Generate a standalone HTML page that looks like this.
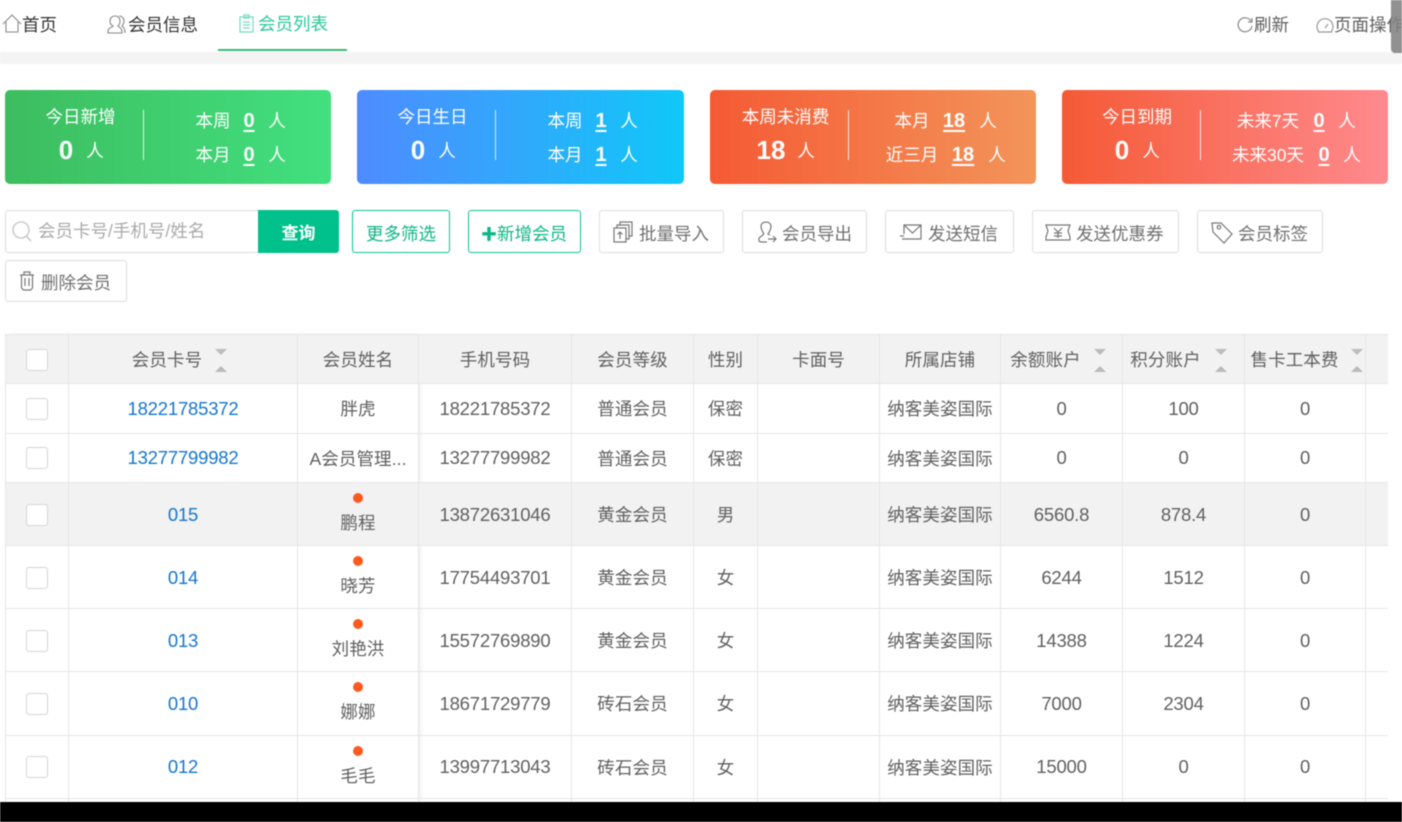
<!DOCTYPE html>
<html lang="zh-CN"><head><meta charset="utf-8"><title>会员列表</title>
<style>
html,body{margin:0;padding:0;background:#fff;width:1402px;height:822px;overflow:hidden}
body{font-family:"Liberation Sans","Noto Sans CJK SC",sans-serif;font-size:17.5px;color:#606060;position:relative}
#w{position:absolute;left:0;top:0;width:1402px;height:822px;filter:blur(.4px);overflow:hidden}
.a{position:absolute;white-space:nowrap;line-height:24px}
.card{position:absolute;top:90px;height:94px;width:326px;border-radius:5px;color:#fff}
.card .a{transform:translateX(-50%);margin-top:1px}
.card u{font-weight:bold;font-size:20px;text-underline-offset:3px;text-decoration-thickness:1.5px}
.dv{position:absolute;top:20px;left:138px;width:1px;height:50px;background:rgba(255,255,255,.8)}
.big{font-size:26px;font-weight:bold;margin-top:0!important}
.btn{position:absolute;box-sizing:border-box;height:43px;top:210px;border:1px solid #ddd;border-radius:3px;background:#fff;color:#707070;line-height:46px;white-space:nowrap}
.btn svg{position:absolute;fill:none;stroke:#777;stroke-width:1.2}
.btn span{position:absolute;top:0}
.gb{border-color:#0cc290;color:#0fb687;text-align:center}
.r{position:absolute;left:5px;display:flex;width:1383px;box-sizing:border-box;border-bottom:1px solid #e6e6e6}
.c{box-sizing:border-box;border-left:1px solid #e6e6e6;display:flex;flex-direction:column;align-items:center;justify-content:center;position:relative;white-space:nowrap;letter-spacing:.1px;padding-top:1px}
.c:nth-child(1){width:63px}.c:nth-child(2){width:229px}.c:nth-child(3){width:121px}.c:nth-child(4){width:153px}.c:nth-child(5){width:122px}.c:nth-child(6){width:64px}.c:nth-child(7){width:122px}.c:nth-child(8){width:121px}.c:nth-child(9){width:122px}.c:nth-child(10){width:122px}.c:nth-child(11){width:121px}.c:nth-child(12){width:23px}
.h{background:#f2f2f2;border-top:1px solid #e6e6e6}
.g{background:#f2f2f2}
.cb{width:22px;height:22px;box-sizing:border-box;border:1px solid #d4d4d4;border-radius:3px;background:#fff}
.l{color:#1676cf;font-size:18.5px;letter-spacing:-.2px}
.n{font-size:18.5px;letter-spacing:-.2px}
.d{width:10px;height:10px;border-radius:50%;background:#fb5a1e;margin-bottom:7px;margin-top:-1px}
.s{position:absolute;top:14px;width:13px;height:23px}
.s:before,.s:after{content:"";position:absolute;left:0;border-left:6.5px solid transparent;border-right:6.5px solid transparent}
.s:before{top:0;border-top:6px solid #bbb}
.s:after{bottom:0;border-bottom:6px solid #bbb}
.tx{margin-left:var(--m,0)}
</style></head><body><div id="w">

<svg class="a" style="left:2px;top:14px" width="21" height="20" fill="none" stroke="#888" stroke-width="1.1"><path d="M1 10 10 1l9 9M4 8v10h12V8"/></svg>
<div class="a" style="left:22px;top:13px;color:#333">首页</div>
<svg class="a" style="left:107px;top:14px" width="21" height="21" fill="none" stroke="#888" stroke-width="1.1"><path d="M8 2c3 0 5 2 5 5 0 2-1 4-2 5l1 1c2 1 3 2 3 6H1c0-4 1-5 4-6l1-1C4 11 3 9 3 7c0-3 2-5 5-5zM12 2c3 0 5 2 5 5 0 2-1 3-2 5 2 1 3 3 3 7"/></svg>
<div class="a" style="left:128px;top:13px;color:#333">会员信息</div>
<svg class="a" style="left:238px;top:14px" width="18" height="20" fill="none" stroke="#7adcc0" stroke-width="1.2"><path d="M2 3h13v15H2zM6 1h5v3H6zM5 8h7M5 11h7M5 14h7"/></svg>
<div class="a" style="left:258px;top:12px;color:#2cc79a">会员列表</div>
<div class="a" style="left:218px;top:49px;width:129px;height:2px;background:#3cb878"></div>
<div class="a" style="left:0;top:52px;width:1402px;height:12px;background:#f4f4f4"></div>
<svg class="a" style="left:1237px;top:17px" width="17" height="17" fill="none" stroke="#888" stroke-width="1.2"><path d="M14 4A7 7 0 1 0 15 9M15 1v4h-4"/></svg>
<div class="a" style="left:1254px;top:13px">刷新</div>
<svg class="a" style="left:1316px;top:17px" width="18" height="17" fill="none" stroke="#999" stroke-width="1.2"><path d="M3 15A8 8 0 1 1 15 15zM9 11l3-4M2 15h14"/></svg>
<div class="a" style="left:1334px;top:13px">页面操作</div>
<div class="a" style="left:1391px;top:0;width:11px;height:53px;background:rgba(130,130,130,.88);border-radius:0 0 0 4px"></div>

<div class="card" style="left:5px;background:linear-gradient(90deg,#3dbd5f,#42e080)">
<div class="a" style="left:75.500px;top:14px">今日新增</div><div class="a big" style="left:61px;top:48px">0</div><div class="a" style="left:90px;top:48px">人</div><div class="dv"></div>
<div class="a" style="left:208px;top:18px">本周</div><div class="a" style="left:244px;top:18px"><u>0</u></div><div class="a" style="left:272px;top:18px">人</div>
<div class="a" style="left:208px;top:52px">本月</div><div class="a" style="left:244px;top:52px"><u>0</u></div><div class="a" style="left:272px;top:52px">人</div></div>

<div class="card" style="left:357px;width:327px;background:linear-gradient(90deg,#4f8bff,#10c8f8)">
<div class="a" style="left:75.500px;top:14px">今日生日</div><div class="a big" style="left:61px;top:48px">0</div><div class="a" style="left:90px;top:48px">人</div><div class="dv"></div>
<div class="a" style="left:208px;top:18px">本周</div><div class="a" style="left:244px;top:18px"><u>1</u></div><div class="a" style="left:272px;top:18px">人</div>
<div class="a" style="left:208px;top:52px">本月</div><div class="a" style="left:244px;top:52px"><u>1</u></div><div class="a" style="left:272px;top:52px">人</div></div>

<div class="card" style="left:710px;background:linear-gradient(90deg,#f55a35,#f3955a)">
<div class="a" style="left:75.500px;top:14px">本周未消费</div><div class="a big" style="left:61px;top:48px">18</div><div class="a" style="left:96px;top:48px">人</div><div class="dv"></div>
<div class="a" style="left:202px;top:18px">本月</div><div class="a" style="left:244px;top:18px"><u>18</u></div><div class="a" style="left:278px;top:18px">人</div>
<div class="a" style="left:202px;top:52px">近三月</div><div class="a" style="left:253px;top:52px"><u>18</u></div><div class="a" style="left:287px;top:52px">人</div></div>

<div class="card" style="left:1062px;background:linear-gradient(90deg,#f55a35,#ff8a8e)">
<div class="a" style="left:75px;top:14px">今日到期</div><div class="a big" style="left:60px;top:48px">0</div><div class="a" style="left:89px;top:48px">人</div><div class="dv"></div>
<div class="a" style="left:206px;top:18px">未来7天</div><div class="a" style="left:257px;top:18px"><u>0</u></div><div class="a" style="left:285px;top:18px">人</div>
<div class="a" style="left:206px;top:52px">未来30天</div><div class="a" style="left:262px;top:52px"><u>0</u></div><div class="a" style="left:290px;top:52px">人</div></div>

<div class="btn" style="left:5px;width:254px;color:#aaa;border-radius:3px 0 0 3px">
<svg style="left:5px;top:9px;stroke:#ccc;stroke-width:1.6" width="22" height="24"><circle cx="10" cy="10" r="8"/><path d="M15 16l5 5"/></svg>
<span style="left:32px;top:-3px">会员卡号/手机号/姓名</span></div>
<div class="btn" style="left:258px;width:81px;background:#00c08b;border-color:#00c08b;color:#fff;text-align:center;border-radius:0 3px 3px 0;font-weight:bold;font-size:17px">查询</div>
<div class="btn gb" style="left:352px;width:98px">更多筛选</div>
<div class="btn gb" style="left:468px;width:113px"><b style="font-size:16px;margin-left:-1px">✚</b>新增会员</div>

<div class="btn" style="left:599px;width:125px"><svg style="left:13px;top:10px" width="21" height="22"><path d="M1 7h12v14H1zM4 7V4h12v14h-3M7 4V1h12v14h-3M7 18v-7M4.500 13.500 7 11l2.500 2.500"/></svg><span style="left:39px">批量导入</span></div>
<div class="btn" style="left:742px;width:125px"><svg style="left:14px;top:10px" width="20" height="23"><path d="M7 13C5 10 4 8 4 5a5 4 0 0 1 10 0c0 3-1 5-3 8l2 1M7 13l-5 4v2q0 2 2 2h6M11 18h8M16 15l3 3-3 3"/></svg><span style="left:39px">会员导出</span></div>
<div class="btn" style="left:885px;width:129px"><svg style="left:13px;top:13px" width="24" height="18"><path d="M5 10V1h17v14H3M5 1l8.500 8L22 1M1 12h4"/></svg><span style="left:42px">发送短信</span></div>
<div class="btn" style="left:1032px;width:147px"><svg style="left:12px;top:13px" width="26" height="18"><path d="M1 1h24l-1 3-1 3 1 3 1 3v3H1v-3l1-3 1-3-1-3zM9 4l4 4 4-4M13 8v6M9 9h8M9 12h8"/></svg><span style="left:43px">发送优惠券</span></div>
<div class="btn" style="left:1197px;width:126px"><svg style="left:13px;top:10px" width="24" height="24"><path d="M1 2h9l11 11-8 9L2 11zM8 8a1.800 1.800 0 1 0-.1 0"/></svg><span style="left:40px">会员标签</span></div>
<div class="btn" style="left:5px;top:260px;width:122px;height:42px"><svg style="left:13px;top:10px" width="16" height="20"><path d="M1 4h14M5 4V1h6v3M2.500 4v13l2 2h7l2-2V4M6 7v8M10 7v8"/></svg><span style="left:35px;top:-1px">删除会员</span></div>

<div class="a" style="left:5px;top:334px;width:413px;height:468px;box-shadow:3px 0 5px -2px rgba(0,0,0,.12)"></div>

<div class="r h" style="top:334px;height:50px">
<div class="c"><div class="cb"></div></div>
<div class="c"><span class="tx" style="--m:-32px">会员卡号</span><i class="s" style="left:146px"></i></div>
<div class="c">会员姓名</div><div class="c">手机号码</div><div class="c">会员等级</div><div class="c">性别</div><div class="c">卡面号</div><div class="c">所属店铺</div>
<div class="c"><span class="tx" style="--m:-32px">余额账户</span><i class="s" style="left:93px"></i></div>
<div class="c"><span class="tx" style="--m:-36px">积分账户</span><i class="s" style="left:92px"></i></div>
<div class="c"><span class="tx" style="--m:-21px">售卡工本费</span><i class="s" style="left:106px"></i></div>
<div class="c"></div></div>

<div class="r" style="top:384px;height:49.500px"><div class="c"><div class="cb"></div></div><div class="c l">18221785372</div><div class="c">胖虎</div><div class="c n">18221785372</div><div class="c">普通会员</div><div class="c">保密</div><div class="c"></div><div class="c">纳客美姿国际</div><div class="c n">0</div><div class="c n">100</div><div class="c n">0</div><div class="c"></div></div>
<div class="r" style="top:433.500px;height:49.500px"><div class="c"><div class="cb"></div></div><div class="c l">13277799982</div><div class="c">A会员管理...</div><div class="c n">13277799982</div><div class="c">普通会员</div><div class="c">保密</div><div class="c"></div><div class="c">纳客美姿国际</div><div class="c n">0</div><div class="c n">0</div><div class="c n">0</div><div class="c"></div></div>
<div class="r g" style="top:483px;height:63px"><div class="c"><div class="cb"></div></div><div class="c l">015</div><div class="c"><div class="d"></div>鹏程</div><div class="c n">13872631046</div><div class="c">黄金会员</div><div class="c">男</div><div class="c"></div><div class="c">纳客美姿国际</div><div class="c n">6560.8</div><div class="c n">878.4</div><div class="c n">0</div><div class="c"></div></div>
<div class="r" style="top:546px;height:63px"><div class="c"><div class="cb"></div></div><div class="c l">014</div><div class="c"><div class="d"></div>晓芳</div><div class="c n">17754493701</div><div class="c">黄金会员</div><div class="c">女</div><div class="c"></div><div class="c">纳客美姿国际</div><div class="c n">6244</div><div class="c n">1512</div><div class="c n">0</div><div class="c"></div></div>
<div class="r" style="top:609px;height:63px"><div class="c"><div class="cb"></div></div><div class="c l">013</div><div class="c"><div class="d"></div>刘艳洪</div><div class="c n">15572769890</div><div class="c">黄金会员</div><div class="c">女</div><div class="c"></div><div class="c">纳客美姿国际</div><div class="c n">14388</div><div class="c n">1224</div><div class="c n">0</div><div class="c"></div></div>
<div class="r" style="top:672px;height:63.500px"><div class="c"><div class="cb"></div></div><div class="c l">010</div><div class="c"><div class="d"></div>娜娜</div><div class="c n">18671729779</div><div class="c">砖石会员</div><div class="c">女</div><div class="c"></div><div class="c">纳客美姿国际</div><div class="c n">7000</div><div class="c n">2304</div><div class="c n">0</div><div class="c"></div></div>
<div class="r" style="top:735.500px;height:63px"><div class="c"><div class="cb"></div></div><div class="c l">012</div><div class="c"><div class="d"></div>毛毛</div><div class="c n">13997713043</div><div class="c">砖石会员</div><div class="c">女</div><div class="c"></div><div class="c">纳客美姿国际</div><div class="c n">15000</div><div class="c n">0</div><div class="c n">0</div><div class="c"></div></div>
<div class="r" style="top:798.500px;height:4px;border:0"><div class="c"></div><div class="c"></div><div class="c"></div><div class="c"></div><div class="c"></div><div class="c"></div><div class="c"></div><div class="c"></div><div class="c"></div><div class="c"></div><div class="c"></div><div class="c"></div></div>

<div class="a" style="left:0;top:802px;width:1402px;height:20px;background:#000"></div>
</div></body></html>
